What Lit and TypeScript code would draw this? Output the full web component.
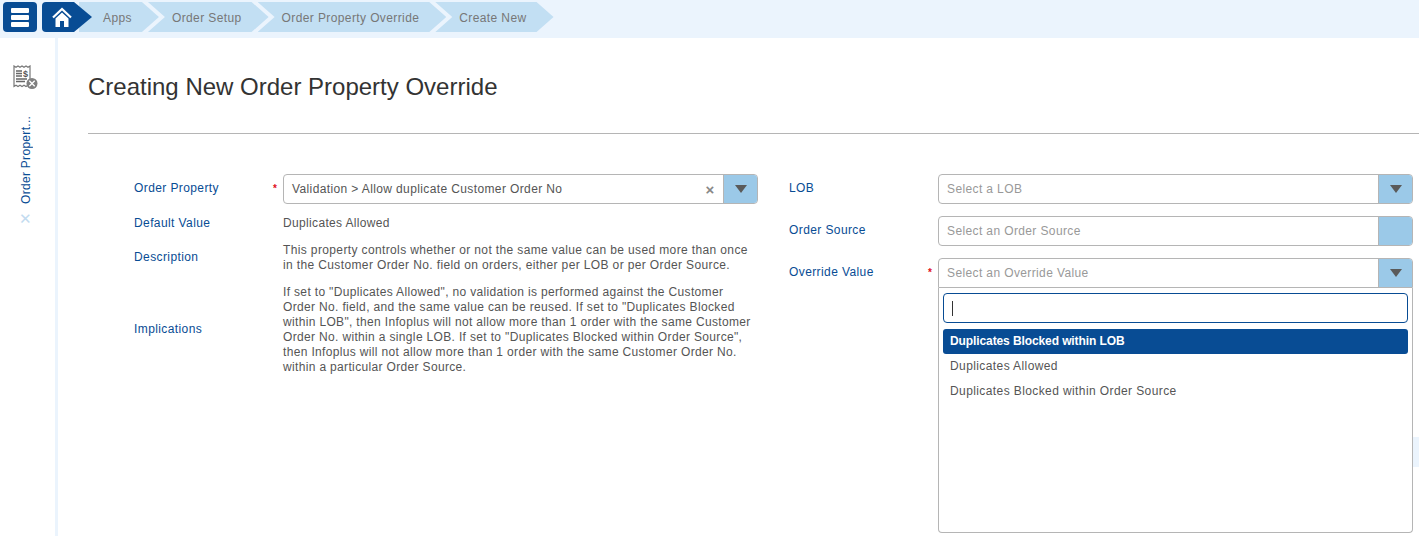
import { LitElement, html, css } from "lit";
import { customElement } from "lit/decorators.js";

@customElement("app-root")
export class AppRoot extends LitElement {
  static styles = css`
    :host { display: block; width: 1419px; height: 536px; overflow: hidden; position: relative; background: #fff; font-family: "Liberation Sans", Arial, sans-serif; font-size: 12px; letter-spacing: 0.4px; color: #555; }
    * { box-sizing: border-box; }
    .top { height: 38px; background: #ebf4fd; display: flex; align-items: flex-start; padding: 2px 0 0 3px; }
    .menu { width: 34px; height: 30px; background: #084c94; border-radius: 4px; display: flex; align-items: center; justify-content: center; }
    .menu svg { display: block; }
    .home { width: 50px; height: 30px; margin-left: 5px; background: #084c94; clip-path: path("M4 0 H32 L50 15 L32 30 H4 Q0 30 0 26 V4 Q0 0 4 0 Z"); position: relative; z-index: 2; padding: 5px 0 0 10px; }
    .home svg { display: block; }
    .crumbs { display: flex; margin-left: -13px; }
    .crumb { height: 30px; line-height: 32px; background: #c2dff3; color: #777; letter-spacing: 0.39px; padding: 0 27px 0 24px; margin-right: -11px; clip-path: polygon(0 0, calc(100% - 17px) 0, 100% 50%, calc(100% - 17px) 100%, 0 100%, 17px 50%); white-space: nowrap; }
    .crumb.first { clip-path: polygon(0 0, calc(100% - 17px) 0, 100% 50%, calc(100% - 17px) 100%, 0 100%); }
    .body { display: flex; height: 498px; }
    .side { width: 58px; flex: none; border-right: 3px solid #ebf4fd; display: flex; flex-direction: column; align-items: center; padding: 27px 3px 0 0; }
    .side-icon { display: block; }
    .side-label { writing-mode: vertical-rl; transform: rotate(180deg); color: #084c94; margin-top: 26px; height: 87px; white-space: nowrap; line-height: 14px; letter-spacing: 0.3px; text-align: left; }
    .side-x { color: #c2dbf0; font-size: 15px; line-height: 14px; margin: 8px 2px 0 0; letter-spacing: 0; }
    .main { flex: 1; min-width: 0; padding: 0 0 0 30px; }
    h1 { margin: 0; height: 96px; padding-top: 34px; font-size: 24px; line-height: 30px; font-weight: 400; color: #333; letter-spacing: 0; border-bottom: 1px solid #b5b5b5; white-space: nowrap; }
    .form { display: flex; padding: 40px 0 0 46px; }
    .col-l { width: 655px; flex: none; }
    .col-r { width: 624px; flex: none; position: relative; }
    .row { display: flex; }
    .lab { width: 149px; flex: none; color: #084c94; position: relative; line-height: 14px; padding-top: 7px; }
    .star { position: absolute; right: 6px; top: 8px; color: #e01020; font-size: 10px; font-weight: 700; letter-spacing: 0; }
    .sel { width: 475px; height: 30px; border: 1px solid #b5b5b5; border-radius: 4px; display: flex; background: #fff; overflow: hidden; }
    .val { flex: 1; line-height: 28px; padding-left: 8px; color: #555; white-space: nowrap; letter-spacing: 0.38px; }
    .val.ph { color: #999; }
    .clr { width: 26px; text-align: center; color: #888; font-size: 15px; line-height: 29px; font-weight: 700; letter-spacing: 0; }
    .arr { width: 34px; flex: none; background: #9bc9e8; border-left: 1px solid #b5b5b5; display: flex; align-items: center; justify-content: center; }
    .tri { width: 0; height: 0; border-left: 6px solid transparent; border-right: 6px solid transparent; border-top: 8px solid #5a5a5a; }
    .r-row { margin-bottom: 12px; }
    .l2 { margin-top: 12px; }
    .l2 .lab { padding-top: 0; }
    .txt { width: 475px; line-height: 15px; letter-spacing: 0.34px; }
    .desc { margin: 12px 0 0; }
    .desc .lab { padding-top: 7px; }
    .desc .txt { letter-spacing: 0.37px; }
    .impl .lab { padding-top: 37px; }
    .impl { margin-top: 12px; }
    .ghost { position: absolute; left: 100%; top: 263px; width: 60px; height: 30px; background: #ebf4fd; }
    .open .sel { border-radius: 4px 4px 0 0; }
    .drop { position: absolute; left: 149px; top: 114px; width: 475px; height: 245px; background: #fff; border: 1px solid #b5b5b5; border-top: none; border-radius: 0 0 4px 4px; padding: 5px 4px 0; z-index: 3; }
    .search { height: 30px; border: 1px solid #084c94; border-radius: 4px; display: flex; align-items: center; padding-left: 8px; }
    .caret { width: 1px; height: 15px; background: #333; }
    .opts { margin-top: 6px; }
    .opt { height: 25px; line-height: 24px; padding-left: 7px; border-radius: 3px; color: #555; }
    .opt.on { background: #084c94; color: #fff; font-weight: 700; letter-spacing: -0.1px; }
  `;

  private select(text: string, placeholder: boolean, clear: boolean, arrow: boolean) {
    return html`<div class="sel">
      <div class="val ${placeholder ? "ph" : ""}">${text}</div>
      ${clear ? html`<div class="clr">×</div>` : ""}
      <div class="arr">${arrow ? html`<div class="tri"></div>` : ""}</div>
    </div>`;
  }

  render() {
    return html`
      <div class="top">
        <div class="menu">
          <svg width="18" height="19" viewBox="0 0 18 19"><path d="M1 0h16a1 1 0 0 1 1 1v3a1 1 0 0 1-1 1H1a1 1 0 0 1-1-1V1a1 1 0 0 1 1-1zM1 7h16a1 1 0 0 1 1 1v3a1 1 0 0 1-1 1H1a1 1 0 0 1-1-1V8a1 1 0 0 1 1-1zM1 14h16a1 1 0 0 1 1 1v3a1 1 0 0 1-1 1H1a1 1 0 0 1-1-1v-3a1 1 0 0 1 1-1z" fill="#fff"/></svg>
        </div>
        <div class="home">
          <svg width="20" height="20" viewBox="0 0 20 20" fill="none"><path d="M1 10.500 10 2l9 8.500" stroke="#fff" stroke-width="2.200"/><path d="M3.500 11.500 10 5.500l6.500 6V20h-4.500v-6H8v6H3.500z" fill="#fff"/></svg>
        </div>
        <div class="crumbs">
          <div class="crumb first">Apps</div>
          <div class="crumb">Order Setup</div>
          <div class="crumb">Order Property Override</div>
          <div class="crumb">Create New</div>
        </div>
      </div>
      <div class="body">
        <div class="side">
          <svg class="side-icon" width="26" height="26" viewBox="0 0 26 26" fill="none">
            <path d="M1 1l2 1.300 2-1.300 2 1.300 2-1.300 2 1.300 2-1.300 2 1.300 2-1.300V21.500l-2-1.300-2 1.300-2-1.300-2 1.300-2-1.300-2 1.300-2-1.300-2 1.300z" stroke="#777" stroke-width="1.200" fill="#fff"/>
            <path d="M3 6h6M3 8.500h6M3 11h6M3 14h11M3 16.500h9" stroke="#666" stroke-width="1.300"/>
            <text x="10" y="11.500" font-family="Liberation Sans" font-size="9" font-weight="700" fill="#555" letter-spacing="0">$</text>
            <circle cx="19" cy="18.500" r="5.500" fill="#808080"/>
            <path d="M16.300 15.800l5.400 5.400M21.700 15.800l-5.400 5.400" stroke="#fff" stroke-width="1.300"/>
          </svg>
          <div class="side-label">Order Propert...</div>
          <div class="side-x">✕</div>
        </div>
        <div class="main">
          <h1>Creating New Order Property Override</h1>
          <div class="form">
            <div class="col-l">
              <div class="row">
                <div class="lab">Order Property<span class="star">*</span></div>
                ${this.select("Validation > Allow duplicate Customer Order No", false, true, true)}
              </div>
              <div class="row l2">
                <div class="lab">Default Value</div>
                <div class="txt">Duplicates Allowed</div>
              </div>
              <div class="row desc">
                <div class="lab">Description</div>
                <div class="txt">This property controls whether or not the same value can be used more than once in the Customer Order No. field on orders, either per LOB or per Order Source.</div>
              </div>
              <div class="row impl">
                <div class="lab">Implications</div>
                <div class="txt">If set to "Duplicates Allowed", no validation is performed against the Customer Order No. field, and the same value can be reused. If set to "Duplicates Blocked within LOB", then Infoplus will not allow more than 1 order with the same Customer Order No. within a single LOB. If set to "Duplicates Blocked within Order Source", then Infoplus will not allow more than 1 order with the same Customer Order No. within a particular Order Source.</div>
              </div>
            </div>
            <div class="col-r">
              <div class="row r-row">
                <div class="lab">LOB</div>
                ${this.select("Select a LOB", true, false, true)}
              </div>
              <div class="row r-row">
                <div class="lab">Order Source</div>
                ${this.select("Select an Order Source", true, false, false)}
              </div>
              <div class="row r-row open">
                <div class="lab">Override Value<span class="star">*</span></div>
                ${this.select("Select an Override Value", true, false, true)}
              </div>
              <div class="drop">
                <div class="search"><div class="caret"></div></div>
                <div class="opts">
                  <div class="opt on">Duplicates Blocked within LOB</div>
                  <div class="opt">Duplicates Allowed</div>
                  <div class="opt">Duplicates Blocked within Order Source</div>
                </div>
              </div>
              <div class="ghost"></div>
            </div>
          </div>
        </div>
      </div>
    `;
  }
}
